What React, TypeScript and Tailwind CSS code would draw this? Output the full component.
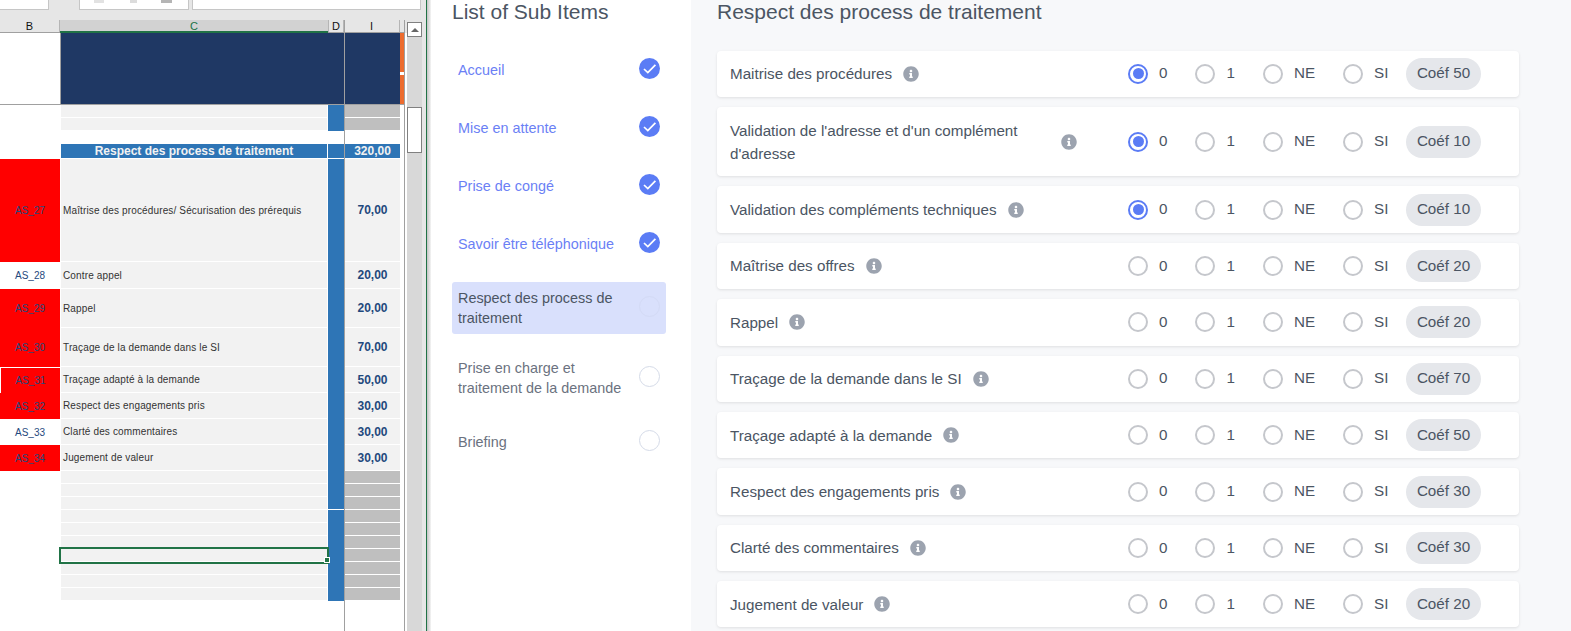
import { FaInfoCircle } from "react-icons/fa";

type SheetRow = {
  h: string;
  code?: string;
  red?: boolean;
  boxed?: boolean;
  label?: string;
  value?: string;
  gray?: boolean;
};

const sheetRows: SheetRow[] = [
  { h: "h-[103px]", code: "AS_27", red: true, label: "Maîtrise des procédures/ Sécurisation des prérequis", value: "70,00" },
  { h: "h-[27px]", code: "AS_28", label: "Contre appel", value: "20,00" },
  { h: "h-[39px]", code: "AS_29", red: true, label: "Rappel", value: "20,00" },
  { h: "h-[39px]", code: "AS_30", red: true, label: "Traçage de la demande dans le SI", value: "70,00" },
  { h: "h-[26px]", code: "AS_31", red: true, boxed: true, label: "Traçage adapté à la demande", value: "50,00" },
  { h: "h-[26px]", code: "AS_32", red: true, label: "Respect des engagements pris", value: "30,00" },
  { h: "h-[26px]", code: "AS_33", label: "Clarté des commentaires", value: "30,00" },
  { h: "h-[26px]", code: "AS_34", red: true, label: "Jugement de valeur", value: "30,00" },
];

const subItems = [
  { label: "Accueil", done: true, mt: "mt-0" },
  { label: "Mise en attente", done: true, mt: "mt-[14px]" },
  { label: "Prise de congé", done: true, mt: "mt-[14px]" },
  { label: "Savoir être téléphonique", done: true, mt: "mt-[14px]" },
  { label: "Respect des process de traitement", active: true, mt: "mt-[16px]" },
  { label: "Prise en charge et traitement de la demande", mt: "mt-[22px]" },
  { label: "Briefing", mt: "mt-[20px]" },
];

const criteria = [
  { label: "Maitrise des procédures", coef: 50, checked: true },
  { label: "Validation de l'adresse et d'un complément d'adresse", coef: 10, checked: true },
  { label: "Validation des compléments techniques", coef: 10, checked: true },
  { label: "Maîtrise des offres", coef: 20 },
  { label: "Rappel", coef: 20 },
  { label: "Traçage de la demande dans le SI", coef: 70 },
  { label: "Traçage adapté à la demande", coef: 50 },
  { label: "Respect des engagements pris", coef: 30 },
  { label: "Clarté des commentaires", coef: 30 },
  { label: "Jugement de valeur", coef: 20 },
];

function EmptyRow({ selected, splitTop }: { selected?: boolean; splitTop?: boolean }) {
  return (
    <div className="flex h-[13px]">
      <div className="w-[61px]" />
      <div className={`relative w-[266px] border-b border-white bg-[#f2f2f2] ${selected ? "z-10 outline-2 outline-[#217346]" : ""}`}>
        {selected && <span className="absolute -right-[3px] top-[8px] h-[6px] w-[6px] border border-white bg-[#217346]" />}
      </div>
      <div className={`ml-px w-[16px] bg-[#2e75b6] ${splitTop ? "border-b border-white" : ""}`} />
      <div className="ml-px w-[55px] border-b border-white bg-[#bfbfbf]" />
    </div>
  );
}

function Sheet() {
  return (
    <div className="flex w-[431px] shrink-0">
      <div className="flex w-[426px] flex-col bg-[#e6e6e6]">
        {/* formula bar */}
        <div className="flex h-[20px] items-start">
          <div className="h-[10px] w-[49px] border-b border-r border-[#c6c6c6] bg-white" />
          <div className="ml-[30px] flex h-[10px] w-[110px] items-start border-x border-b border-[#c6c6c6] bg-white">
            <span className="ml-[14px] h-[3px] w-[10px] bg-[#e2e2e2]" />
            <span className="ml-[26px] h-[3px] w-[7px] bg-[#dcdcdc]" />
            <span className="ml-[24px] h-[3px] w-[11px] bg-[#b5b5b5]" />
          </div>
          <div className="ml-[3px] h-[10px] w-[229px] border-x border-b border-[#c6c6c6] bg-white" />
        </div>
        <div className="flex flex-1">
          <div className="relative flex w-[405px] flex-col border-r border-[#a0a0a0]">
            {/* column letters */}
            <div className="flex h-[13px] border-b border-[#a0a0a0] text-center text-[11px] leading-[12px] text-[#111] [font-family:'Liberation_Sans',sans-serif]">
              <div className="w-[60px] border-r border-[#b5b5b5]">B</div>
              <div className="-mb-px w-[268px] border-b-2 border-[#217346] bg-[#d2d2d2] text-[#217346]">C</div>
              <div className="w-[16px] border-x border-[#b5b5b5]">D</div>
              <div className="w-[56px] border-r border-[#b5b5b5]">I</div>
            </div>
            <div className="flex-1 bg-white [font-family:'Liberation_Sans',sans-serif]">
              {/* banner */}
              <div className="flex h-[72px] border-b border-[#a0a0a0]">
                <div className="w-[60px]" />
                <div className="flex-1 border-l border-[#a0a0a0] bg-[#1f3864]" />
                <div className="flex w-[4px] flex-col bg-[#ed6c2f]">
                  <div className="mt-[39px] h-[3px] bg-white" />
                </div>
              </div>
              <EmptyRow />
              <EmptyRow />
              <div className="h-[13px]" />
              {/* section title */}
              <div className="flex h-[15px] text-[12px] font-bold leading-[14px] text-[#f2f2f2]">
                <div className="w-[61px]" />
                <div className="w-[266px] border-b border-white bg-[#2e75b6] text-center">Respect des process de traitement</div>
                <div className="ml-px w-[16px] border-b border-white bg-[#2e75b6]" />
                <div className="ml-px w-[55px] border-b border-white bg-[#2e75b6] text-center">320,00</div>
              </div>
              {sheetRows.map((row) => (
                <div key={row.code} className={`flex ${row.h}`}>
                  <div
                    className={`flex w-[60px] items-center justify-center text-[10px] text-[#1f497d] ${row.red ? "bg-[#ff0000]" : ""} ${row.boxed ? "border-l border-t border-white" : ""}`}
                  >
                    {row.code}
                  </div>
                  <div className="ml-px flex w-[266px] items-center border-b border-white bg-[#f2f2f2] pl-[2px] text-[10px] tracking-[0.14px] text-[#333]">
                    {row.label}
                  </div>
                  <div className="ml-px w-[16px] bg-[#2e75b6]" />
                  <div className="ml-px flex w-[55px] items-center justify-center border-b border-white bg-[#f2f2f2] text-[12px] font-bold text-[#1f497d]">
                    {row.value}
                  </div>
                </div>
              ))}
              {[0, 1, 2, 3, 4, 5, 6, 7, 8, 9].map((i) => (
                <EmptyRow key={i} selected={i === 6} splitTop={i === 2} />
              ))}
            </div>
            {/* frozen pane line */}
            <div className="absolute bottom-0 left-[344px] top-0 w-px bg-[#a0a0a0]" />
          </div>
          {/* scrollbar */}
          <div className="flex flex-1">
            <div className="mt-[13px] w-[2px] bg-white" />
            <div className="mt-[2px] flex w-[15px] flex-col bg-[#d8d8d8]">
              <div className="flex h-[15px] items-center justify-center border border-[#808080] bg-white">
                <span className="h-0 w-0 border-x-[4px] border-b-[4px] border-x-transparent border-b-[#666]" />
              </div>
              <div className="mt-[70px] h-[46px] border border-[#808080] bg-white" />
            </div>
          </div>
        </div>
      </div>
      <div className="w-px bg-[#217346]" />
      <div className="w-[4px] bg-gradient-to-r from-[#c4c4c4] to-[#f5f5f5]" />
    </div>
  );
}

function StatusDot({ done, active }: { done?: boolean; active?: boolean }) {
  if (done) {
    return (
      <svg viewBox="0 0 21 21" className="mb-[3px] h-[21px] w-[21px] shrink-0">
        <circle cx="10.5" cy="10.5" r="10.5" fill="#5b7cf5" />
        <path d="M5 11 L8.8 14.6 L16.4 6.8" fill="none" stroke="#fff" strokeWidth="1.7" />
      </svg>
    );
  }
  return <span className={`mb-[3px] h-[21px] w-[21px] shrink-0 rounded-full border ${active ? "border-[#d3daf5]" : "border-[#d5dbe8]"}`} />;
}

function SubItemList() {
  return (
    <div className="flex w-[260px] shrink-0 flex-col bg-white pl-[21px] [font-family:'Liberation_Sans',sans-serif]">
      <h2 className="text-[21px] leading-[24px] text-[#4b5563]">List of Sub Items</h2>
      <div className="mt-[24px] flex w-[214px] flex-col">
        {subItems.map((item) => (
          <div
            key={item.label}
            className={`flex items-center justify-between rounded-[3px] pl-[6px] pr-[6px] text-[14.4px] leading-[20px] ${item.mt} ${item.active ? "min-h-[52px] bg-[#d9e0fc] text-[#4b5563]" : "min-h-[44px]"} ${item.done ? "text-[#6b7ff5]" : ""} ${!item.done && !item.active ? "text-[#6b7280]" : ""}`}
          >
            <span className="w-[170px]">{item.label}</span>
            <StatusDot done={item.done} active={item.active} />
          </div>
        ))}
      </div>
    </div>
  );
}

function Radio({ label, checked }: { label: string; checked?: boolean }) {
  return (
    <label className="flex items-center gap-[11px]">
      <span
        className={`flex h-[20px] w-[20px] items-center justify-center rounded-full border-2 ${checked ? "border-[#5b7cf5]" : "border-[#c5c7cc]"}`}
      >
        {checked && <span className="h-[11px] w-[11px] rounded-full bg-[#5b7cf5]" />}
      </span>
      {label}
    </label>
  );
}

function CriteriaList() {
  return (
    <div className="flex-1 bg-[#f7f8fa] pl-[26px] [font-family:'Liberation_Sans',sans-serif]">
      <h1 className="text-[21px] leading-[24px] text-[#4b5563]">Respect des process de traitement</h1>
      <div className="mt-[26.6px] flex w-[802px] flex-col gap-[10px]">
        {criteria.map((c) => (
          <div
            key={c.label}
            className="flex min-h-[46.4px] shrink-0 items-center rounded-[4px] bg-white pl-[13px] pr-[38px] text-[15.2px] text-[#4b5563] shadow-[0_1px_3px_rgba(0,0,0,0.1)]"
          >
            <div className="flex flex-1 items-center">
              <span className="max-w-[320px] py-[11.7px] leading-[23px]">{c.label}</span>
              <FaInfoCircle className="ml-[11px] h-[16px] w-[16px] shrink-0 text-[#9ca3af]" />
            </div>
            <div className="flex items-center gap-[28px]">
              <Radio label="0" checked={c.checked} />
              <Radio label="1" />
              <Radio label="NE" />
              <Radio label="SI" />
            </div>
            <span className="ml-[17.6px] flex h-[32px] w-[75px] items-center justify-center rounded-full bg-[#e5e7eb]">
              Coéf {c.coef}
            </span>
          </div>
        ))}
      </div>
    </div>
  );
}

export default function App() {
  return (
    <div className="flex h-[631px] w-[1571px] overflow-hidden">
      <Sheet />
      <SubItemList />
      <CriteriaList />
    </div>
  );
}
